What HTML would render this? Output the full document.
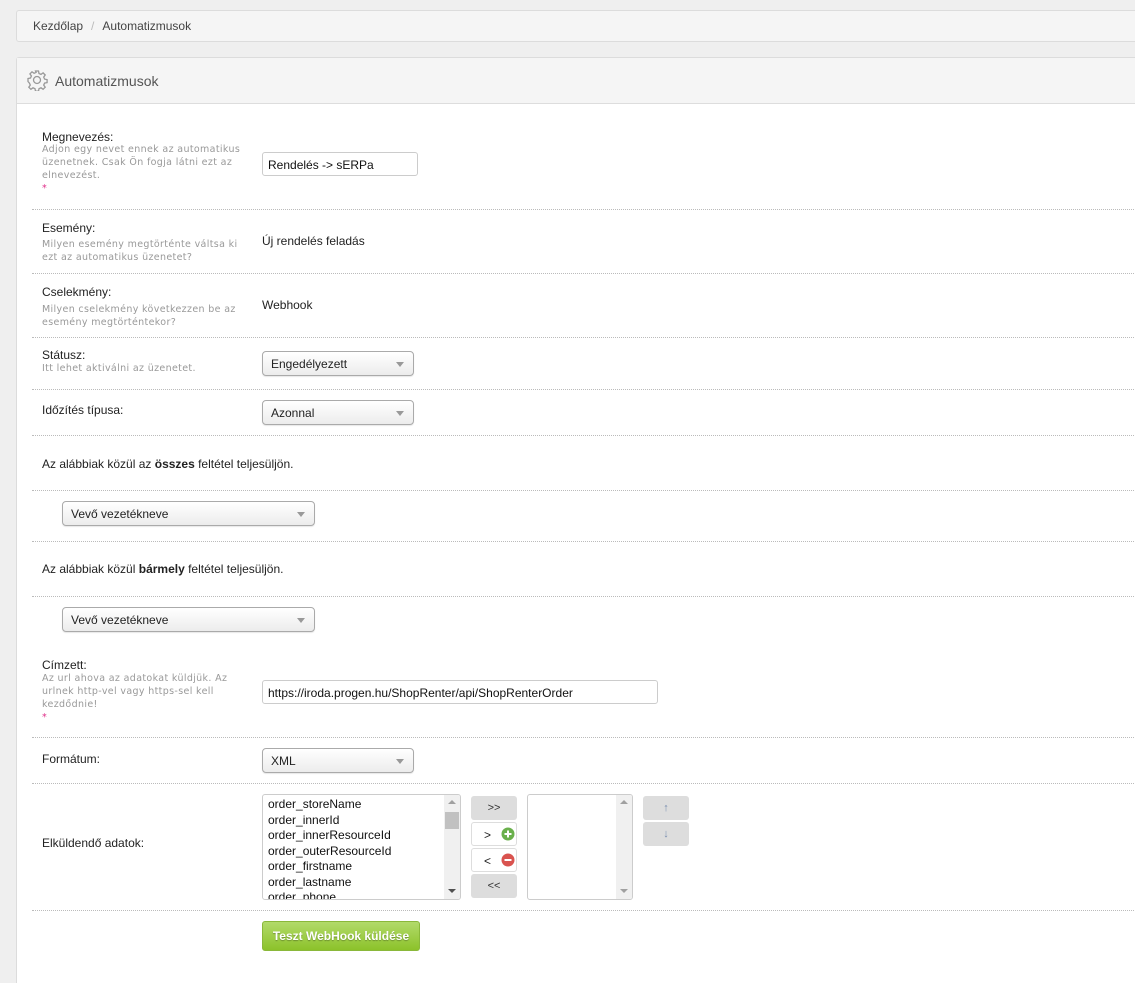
<!DOCTYPE html>
<html><head><meta charset="utf-8"><style>
*{box-sizing:border-box}
html,body{margin:0;width:1135px;height:983px;overflow:hidden}
body{background:#efefef;font-family:"Liberation Sans",Arial,sans-serif;font-size:12px;color:#222;position:relative}
.a{position:absolute}
.bc{left:16px;top:10px;width:1130px;height:32px;background:#f5f5f5;border:1px solid #dcdcdc;border-radius:3px;color:#444;padding:8px 0 0 16px}
.bc span{color:#bbb;margin:0 8px}
.panel{left:16px;top:57px;width:1130px;height:926px;background:#fff;border:1px solid #dcdcdc;border-bottom:0;border-radius:3px 3px 0 0}
.ph{left:17px;top:58px;width:1120px;height:46px;background:#f5f5f5;border-bottom:1px solid #ddd}
.ttl{left:55px;top:73px;font-size:14px;color:#555}
.sep{left:32px;width:1110px;height:0;border-top:1px dotted #bbb}
.lbl{left:42px;color:#222}
.help{left:42px;font-family:"DejaVu Sans",Verdana,sans-serif;font-size:9.5px;letter-spacing:0.35px;color:#999;line-height:13px;width:200px}
.req{color:#e0308a}
.inp{border:1px solid #ccc;border-radius:3px;background:#fff;padding:5px 5px;font-size:12px;color:#111}
.sel{border:1px solid #aaa;border-radius:4px;background:linear-gradient(#fff,#ececec);padding:5px 8px;color:#222;box-shadow:0 1px 1px rgba(0,0,0,.1)}
.sel:after{content:"";position:absolute;right:9px;top:10px;border:4px solid transparent;border-top:5px solid #999;border-bottom:0}
.lb{border:1px solid #ccc;border-radius:3px;background:#fff;overflow:hidden}
.btn{background:#ddd;border-radius:3px;text-align:center;font-size:11px;color:#333}
.bw{background:#fff;border:1px solid #ddd;border-radius:3px}
</style></head><body>
<div class="a bc">Kezdőlap<span>/</span>Automatizmusok</div>
<div class="a panel"></div>
<div class="a ph"></div>
<svg class="a" style="left:26px;top:69px" width="22" height="22" viewBox="0 0 22 22"><g fill="none" stroke="#999" stroke-width="1.3"><circle cx="11" cy="11" r="3.5"/><path d="M9.5 2h3l.5 2.5 2 .9 2.1-1.5 2.1 2.1-1.5 2.1.9 2 2.5.5v3l-2.5.5-.9 2 1.5 2.1-2.1 2.1-2.1-1.5-2 .9-.5 2.5h-3l-.5-2.5-2-.9-2.1 1.5-2.1-2.1 1.5-2.1-.9-2L2 12.5v-3l2.5-.5.9-2L3.9 4.9 6 2.8l2.1 1.5 2-.9z"/></g></svg>
<div class="a ttl">Automatizmusok</div>

<div class="a lbl" style="top:130px">Megnevezés:</div>
<div class="a help" style="top:143px">Adjon egy nevet ennek az automatikus üzenetnek. Csak Ön fogja látni ezt az elnevezést.<br><span class="req">*</span></div>
<div class="a inp" style="left:262px;top:152px;width:156px;height:24px">Rendelés -&gt; sERPa</div>
<div class="a sep" style="top:209px"></div>

<div class="a lbl" style="top:221px">Esemény:</div>
<div class="a help" style="top:238px">Milyen esemény megtörténte váltsa ki ezt az automatikus üzenetet?</div>
<div class="a" style="left:262px;top:234px">Új rendelés feladás</div>
<div class="a sep" style="top:273px"></div>

<div class="a lbl" style="top:285px">Cselekmény:</div>
<div class="a help" style="top:303px">Milyen cselekmény következzen be az esemény megtörténtekor?</div>
<div class="a" style="left:262px;top:298px">Webhook</div>
<div class="a sep" style="top:337px"></div>

<div class="a lbl" style="top:348px">Státusz:</div>
<div class="a help" style="top:362px;width:220px">Itt lehet aktiválni az üzenetet.</div>
<div class="a sel" style="left:262px;top:351px;width:152px;height:25px">Engedélyezett</div>
<div class="a sep" style="top:389px"></div>

<div class="a lbl" style="top:403px">Időzítés típusa:</div>
<div class="a sel" style="left:262px;top:400px;width:152px;height:25px">Azonnal</div>
<div class="a sep" style="top:435px"></div>

<div class="a lbl" style="top:457px">Az alábbiak közül az <b>összes</b> feltétel teljesüljön.</div>
<div class="a sep" style="top:490px"></div>
<div class="a sel" style="left:62px;top:501px;width:253px;height:25px">Vevő vezetékneve</div>
<div class="a sep" style="top:541px"></div>

<div class="a lbl" style="top:562px">Az alábbiak közül <b>bármely</b> feltétel teljesüljön.</div>
<div class="a sep" style="top:596px"></div>
<div class="a sel" style="left:62px;top:607px;width:253px;height:25px">Vevő vezetékneve</div>

<div class="a lbl" style="top:658px">Címzett:</div>
<div class="a help" style="top:672px">Az url ahova az adatokat küldjük. Az urlnek http-vel vagy https-sel kell kezdődnie!<br><span class="req">*</span></div>
<div class="a inp" style="left:262px;top:680px;width:396px;height:24px">https://iroda.progen.hu/ShopRenter/api/ShopRenterOrder</div>
<div class="a sep" style="top:737px"></div>

<div class="a lbl" style="top:752px">Formátum:</div>
<div class="a sel" style="left:262px;top:748px;width:152px;height:25px">XML</div>
<div class="a sep" style="top:783px"></div>

<div class="a lbl" style="top:836px">Elküldendő adatok:</div>
<div class="a lb" style="left:262px;top:794px;width:199px;height:106px">
<div style="padding:2px 0 0 5px;line-height:15.5px;font-size:12px;color:#111">order_storeName<br>order_innerId<br>order_innerResourceId<br>order_outerResourceId<br>order_firstname<br>order_lastname<br>order_phone</div>
<div class="a" style="right:0;top:0;width:16px;height:104px;background:#f0f0f0"><div class="a" style="left:1px;top:17px;width:14px;height:17px;background:#c1c1c1"></div><div class="a" style="left:4px;top:5px;border:4px solid transparent;border-bottom:4px solid #a0a0a0;border-top:0"></div><div class="a" style="left:4px;bottom:6px;border:4px solid transparent;border-top:4px solid #505050;border-bottom:0"></div></div>
</div>
<div class="a btn" style="left:471px;top:796px;width:46px;height:24px;line-height:24px">&gt;&gt;</div>
<div class="a bw" style="left:471px;top:822px;width:46px;height:24px"><span class="a" style="left:12px;top:5px">&gt;</span><svg class="a" style="left:29px;top:4px" width="14" height="14"><circle cx="7" cy="7" r="6.5" fill="#6ab04c"/><path d="M7 3.5v7M3.5 7h7" stroke="#fff" stroke-width="2"/></svg></div>
<div class="a bw" style="left:471px;top:848px;width:46px;height:24px"><span class="a" style="left:12px;top:5px">&lt;</span><svg class="a" style="left:29px;top:4px" width="14" height="14"><circle cx="7" cy="7" r="6.5" fill="#d9534f"/><path d="M3.5 7h7" stroke="#fff" stroke-width="2"/></svg></div>
<div class="a btn" style="left:471px;top:874px;width:46px;height:24px;line-height:24px">&lt;&lt;</div>
<div class="a lb" style="left:527px;top:794px;width:106px;height:106px"><div class="a" style="right:0;top:0;width:16px;height:104px;background:#f0f0f0"><div class="a" style="left:4px;top:5px;border:4px solid transparent;border-bottom:4px solid #a0a0a0;border-top:0"></div><div class="a" style="left:4px;bottom:6px;border:4px solid transparent;border-top:4px solid #a0a0a0;border-bottom:0"></div></div></div>
<div class="a btn" style="left:643px;top:796px;width:46px;height:24px;line-height:24px;color:#7a8fb0">↑</div>
<div class="a btn" style="left:643px;top:822px;width:46px;height:24px;line-height:24px;color:#7a8fb0">↓</div>
<div class="a sep" style="top:910px"></div>
<div class="a" style="left:262px;top:921px;width:158px;height:30px;border-radius:3px;background:linear-gradient(#b2da6a,#8cc22a);border:1px solid #8ab83a;color:#fff;font-weight:bold;text-align:center;line-height:28px;text-shadow:0 1px 1px rgba(0,0,0,.3)">Teszt WebHook küldése</div>
</body></html>
